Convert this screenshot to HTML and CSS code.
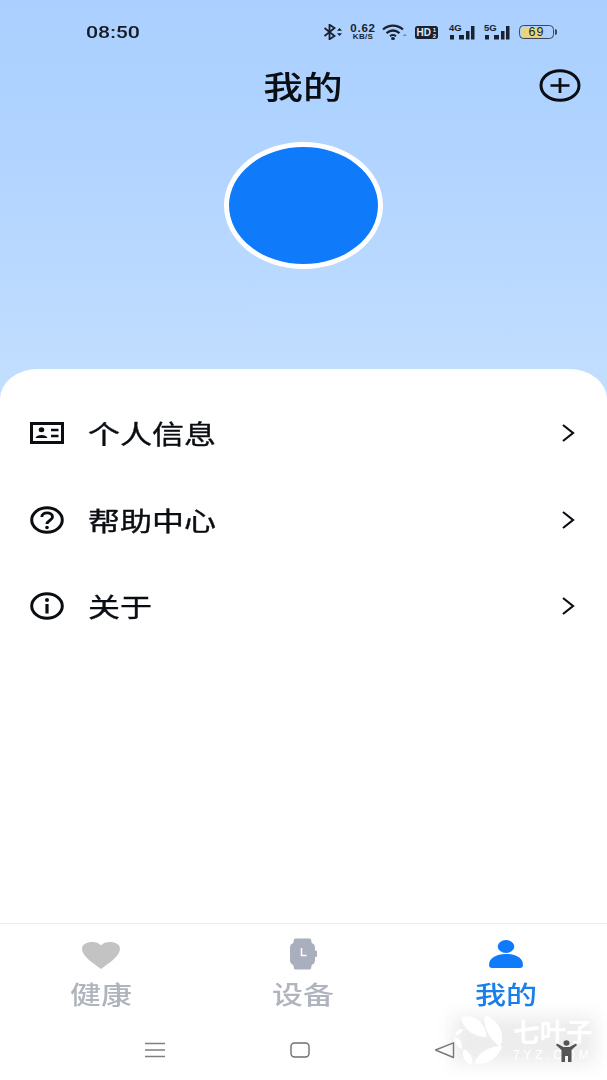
FILE: index.html
```html
<!DOCTYPE html>
<html lang="zh-CN">
<head>
<meta charset="utf-8">
<title>我的</title>
<link rel="stylesheet" href="styles.css">
</head>
<body>
<div class="screen">
  <header class="hero">
    <div class="status">
      <span class="time">08:50</span>
      <div class="status-icons">
        <svg class="i-bt" width="19" height="16" viewBox="0 0 19 16"><path d="M0.500 4l10 8-5 3.300V.7l5 3.300-10 8" fill="none" stroke="#1a2230" stroke-width="1.800"/><path d="M13 6.700l2.500-2.700 2.500 2.700zM13 9.300l2.500 2.700 2.500-2.700z" fill="#1a2230"/></svg>
        <div class="speed"><span class="speed-num">0.62</span><span class="speed-unit">KB/S</span></div>
        <svg class="i-wifi" width="26" height="16" viewBox="0 0 26 16"><path d="M1 5.500C7 .3 15 .3 21 5.500M4.500 9.200C9 5.500 13 5.500 17.500 9.200" fill="none" stroke="#1a2230" stroke-width="2.300"/><path d="M8 12.200c2-1.500 4-1.500 6 0" fill="none" stroke="#1a2230" stroke-width="2"/><ellipse cx="11" cy="14.500" rx="2" ry="1.500" fill="#1a2230"/><path d="M20.500 12l2.200-2.200 2.200 2.200z" fill="#7f8da0"/></svg>
        <svg class="i-hd" width="23" height="13" viewBox="0 0 23 13"><rect width="23" height="13" rx="2.500" fill="#1a2230"/><text class="hd-text" x="1.500" y="10">HD</text><text class="hd-sub" x="17.800" y="5.800">1</text><text class="hd-sub" x="17.800" y="11.500">2</text></svg>
        <div class="signal"><span class="net">4G</span><svg width="26" height="16" viewBox="0 0 26 16"><path d="M1 11h4v4.500H1zM10 11h5v4.500h-5zM17 7h3.500v8.500H17zM22 2h3.500v13.500H22z" fill="#1a2230"/></svg></div>
        <div class="signal"><span class="net">5G</span><svg width="26" height="16" viewBox="0 0 26 16"><path d="M1 11h4v4.500H1zM10 11h5v4.500h-5zM17 7h3.500v8.500H17zM22 2h3.500v13.500H22z" fill="#1a2230"/></svg></div>
        <div class="battery"><div class="battery-body"><span class="battery-fill"></span><span class="battery-num">69</span></div><span class="battery-cap"></span></div>
      </div>
    </div>
    <div class="title-row">
      <span></span>
      <h1 class="title"><span class="wide-c">我的</span></h1>
      <svg class="add" width="42" height="33" viewBox="0 0 42 33"><ellipse cx="21" cy="16.500" rx="19" ry="14.800" fill="none" stroke="#0a0d12" stroke-width="3"/><path d="M11.500 16.500h19M21 9v15" fill="none" stroke="#0a0d12" stroke-width="2.700"/></svg>
    </div>
    <div class="avatar"></div>
  </header>

  <main class="sheet">
    <div class="row">
      <svg class="row-icon" width="34" height="24" viewBox="0 0 34 24"><rect x="1.500" y="2.500" width="31" height="19" fill="none" stroke="#0a0d12" stroke-width="3"/><ellipse cx="11.500" cy="8.800" rx="2.800" ry="2.500" fill="#0a0d12"/><path d="M5.500 17c1-4 11-4 12 0z" fill="#0a0d12"/><path d="M21 9h7.500M21 15h7.500" stroke="#0a0d12" stroke-width="2.400"/></svg>
      <span class="row-label"><span class="wide-l">个人信息</span></span>
      <svg class="chev" width="14" height="20" viewBox="0 0 14 20"><path d="M2 2l10 8-10 8" fill="none" stroke="#0a0d12" stroke-width="2.200"/></svg>
    </div>
    <div class="row">
      <svg class="row-icon" width="34" height="28" viewBox="0 0 34 28"><ellipse cx="17" cy="14" rx="15.300" ry="12.200" fill="none" stroke="#0a0d12" stroke-width="3"/><path d="M11.800 11C11.800 5.500 22.500 5.500 22.500 11 22.500 14.500 17 14.500 17 18" fill="none" stroke="#0a0d12" stroke-width="2.900"/><circle cx="17" cy="21.500" r="1.800" fill="#0a0d12"/></svg>
      <span class="row-label"><span class="wide-l">帮助中心</span></span>
      <svg class="chev" width="14" height="20" viewBox="0 0 14 20"><path d="M2 2l10 8-10 8" fill="none" stroke="#0a0d12" stroke-width="2.200"/></svg>
    </div>
    <div class="row">
      <svg class="row-icon" width="34" height="28" viewBox="0 0 34 28"><ellipse cx="17" cy="14" rx="15.300" ry="12.200" fill="none" stroke="#0a0d12" stroke-width="3"/><path d="M17 12v9.500" fill="none" stroke="#0a0d12" stroke-width="3.200"/><circle cx="17" cy="8" r="2" fill="#0a0d12"/></svg>
      <span class="row-label"><span class="wide-l">关于</span></span>
      <svg class="chev" width="14" height="20" viewBox="0 0 14 20"><path d="M2 2l10 8-10 8" fill="none" stroke="#0a0d12" stroke-width="2.200"/></svg>
    </div>
  </main>

  <nav class="tabs">
    <div class="tab">
      <svg width="40" height="32" viewBox="0 0 40 32"><path d="M20 31C12 25 1 18 1 11 1 6 6 4 11 4 15 4 18 5 20 7.500 22 5 25 4 29 4 34 4 39 6 39 11 39 18 28 25 20 31z" fill="#c3c3c3"/></svg>
      <span class="tab-label"><span class="wide-c">健康</span></span>
    </div>
    <div class="tab">
      <svg width="28" height="32" viewBox="0 0 28 32"><path d="M5 1.500C5 .7 6 .5 7 .5h13c1 0 2 .2 2 1L23 6H4zM4 26h19l-1 4.500c0 .8-1 1-2 1H7c-1 0-2-.2-2-1z" fill="#a9afbc"/><rect x="1" y="5" width="25" height="22" rx="4.500" fill="#a9afbc"/><rect x="25.500" y="12.500" width="2.500" height="6.500" rx="1" fill="#a9afbc"/><path d="M12.500 10v7.500h5" fill="none" stroke="#fff" stroke-width="1.500"/></svg>
      <span class="tab-label"><span class="wide-c">设备</span></span>
    </div>
    <div class="tab tab-active">
      <svg width="36" height="32" viewBox="0 0 36 32"><ellipse cx="18" cy="8.500" rx="8.300" ry="6.500" fill="#0f7bfb"/><path d="M1 27C1 20 8 16 18 16S35 20 35 27c0 2-1 3-3 3H4C2 30 1 29 1 27z" fill="#0f7bfb"/></svg>
      <span class="tab-label"><span class="wide-c">我的</span></span>
    </div>
  </nav>

  <div class="sysnav">
    <svg width="22" height="18" viewBox="0 0 22 18"><path d="M1 2.500h20M1 9h20M1 15.500h20" stroke="#7f7f7f" stroke-width="1.300"/></svg>
    <svg width="20" height="18" viewBox="0 0 20 18"><rect x="1" y="2" width="18" height="14" rx="3.500" fill="none" stroke="#6f6f6f" stroke-width="1.400"/></svg>
    <svg width="21" height="18" viewBox="0 0 21 18"><path d="M1.500 9L19.500 1.800V16.500z" fill="none" stroke="#7a7a7a" stroke-width="1.400" stroke-linejoin="round"/></svg>
  </div>

  <div class="watermark">
    <svg class="wm-logo" width="54" height="54" viewBox="0 0 54 54"><path d="M9 5C20 2 33 8 35 25 22 25 11 18 9 5zM33 3C47 9 54 22 48 35 40 29 30 17 33 3zM23 51C26 40 38 34 50 34 47 46 34 54 23 51zM12 37C19 41 22 47 19 53 12 50 9 43 12 37zM3 25C8 26 11 31 10 37 5 35 2 30 3 25zM3 23C4 19 7 17 11 17 10 21 7 23 3 23z" fill="#fff"/></svg>
    <div class="wm-text"><span class="wm-cn">七叶子</span><span class="wm-en">7YZ.COM</span></div>
  </div>
  <svg class="access" width="21" height="22" viewBox="0 0 21 22"><ellipse cx="10.500" cy="3" rx="3" ry="2.800" fill="#555"/><path d="M0 5l1-1.500L7.500 7h6L20 3.500 21 5l-5.500 5v12H12v-6H9v6H5.500V10z" fill="#555"/></svg>
</div>
</body>
</html>
```

FILE: styles.css
```css
* { box-sizing: border-box; }
html, body { margin: 0; padding: 0; }
body { font-family: "Noto Sans CJK SC", "Noto Sans", sans-serif; color: #0a0d12; }
.screen {
  position: relative;
  width: 607px;
  height: 1080px;
  overflow: hidden;
  display: flex;
  flex-direction: column;
  background: #fff;
}
.hero {
  height: 410px;
  flex: none;
  display: flex;
  flex-direction: column;
  background: linear-gradient(180deg, #abd0ff 0, #b0d3ff 140px, #c4dfff 410px);
}
.status {
  height: 32px;
  margin-top: 16px;
  display: flex;
  align-items: center;
  padding-left: 86px;
}
.time {
  display: inline-block;
  font-family: Roboto, sans-serif;
  font-size: 17px;
  font-weight: 500;
  width: 53px;
  white-space: nowrap;
  transform: scaleX(1.25);
  transform-origin: left center;
  color: #141a24;
}
.status-icons {
  margin-left: 185px;
  display: flex;
  align-items: center;
  color: #1a2230;
}
.i-bt { flex: none; margin-right: 6px; }
.speed { width: 28px; display: flex; flex-direction: column; align-items: center; font-family: "Liberation Sans", sans-serif; font-weight: 700; margin-right: 5px; }
.speed-num { font-size: 11.500px; line-height: 10px; letter-spacing: .8px; }
.speed-unit { font-size: 8px; line-height: 8px; letter-spacing: .3px; }
.i-wifi { flex: none; margin-right: 7px; }
.i-hd { flex: none; margin-right: 11px; }
.hd-text { font: 700 10px "Liberation Sans", sans-serif; fill: #dfe9f8; }
.hd-sub { font: 700 6px "Liberation Sans", sans-serif; fill: #dfe9f8; }
.signal { display: flex; align-items: flex-end; width: 26px; height: 16px; position: relative; margin-right: 9px; }
.net { position: absolute; left: 0; top: -1px; font: 700 9.500px/9px "Liberation Sans", sans-serif; }
.battery { display: flex; align-items: center; gap: 1px; }
.battery-body {
  width: 35px; height: 14px; border: 1.500px solid #3d4654; border-radius: 4.500px;
  position: relative; overflow: hidden; display: flex; align-items: center; justify-content: center;
}
.battery-fill { position: absolute; left: 1px; top: 1px; bottom: 1px; width: 21px; background: #e8d67f; border-radius: 2px; }
.battery-num { position: relative; font: 400 12.500px/12px "Liberation Sans", sans-serif; letter-spacing: 1px; }
.battery-cap { width: 2px; height: 6px; background: #3d4654; border-radius: 0 2px 2px 0; }
.title-row {
  margin-top: 16px;
  height: 44px;
  display: grid;
  grid-template-columns: 1fr auto 1fr;
  align-items: center;
  padding-right: 26px;
}
.title-row .add { justify-self: end; margin-bottom: 2px; }
.title { margin: 0 0 3px 26px; font-size: 32px; line-height: 40px; font-weight: 500; }
.wide-c { display: inline-block; transform: scaleX(1.24); transform-origin: center; white-space: nowrap; }
.wide-l { display: inline-block; transform: scaleX(1.23); transform-origin: left center; white-space: nowrap; }
.avatar {
  margin: 34px auto 0;
  width: 159px;
  height: 127px;
  border-radius: 50%;
  background: #0f7bfb;
  border: 5px solid #fff;
}
.sheet {
  flex: 1;
  margin-top: -41px;
  position: relative;
  padding-top: 21px;
  background: #fff;
  border-radius: 38px 38px 0 0 / 30px 30px 0 0;
}
.row {
  height: 86.500px;
  display: flex;
  align-items: center;
  padding: 0 32px 0 30px;
}
.row-icon { flex: none; width: 34px; }
.row-label { flex: 1; margin-left: 24px; font-size: 26px; line-height: 36px; font-weight: 400; -webkit-text-stroke: .35px #0a0d12; color: #0a0d12; }
.chev { flex: none; }
.tabs {
  flex: none;
  height: 97px;
  border-top: 1px solid #ececec;
  display: grid;
  grid-template-columns: repeat(3, 1fr);
  background: #fff;
  padding-top: 14px;
}
.tab { display: flex; flex-direction: column; align-items: center; color: #b0b5bd; }
.tab svg { height: 32px; flex: none; }
.tab-label { font-size: 25px; line-height: 30px; margin-top: 8px; font-weight: 500; }
.tab-active .tab-label { color: #1a7fea; }
.sysnav {
  flex: none;
  height: 60px;
  padding: 0 0 0 144px;
  display: grid;
  grid-template-columns: 146px 144px 21px;
  align-items: center;
  background: #fff;
}
.watermark {
  position: absolute;
  left: 452px;
  top: 1012px;
  display: flex;
  gap: 7px;
  color: #fff;
}
.watermark::before {
  content: "";
  position: absolute;
  left: 0;
  top: 4px;
  width: 144px;
  height: 48px;
  background: rgba(60, 60, 60, .09);
  filter: blur(8px);
}
.wm-logo { position: relative; flex: none; }
.wm-text { position: relative; display: flex; flex-direction: column; padding-top: 4px; }
.wm-cn { font-size: 26.500px; line-height: 30px; font-weight: 700; white-space: nowrap; }
.wm-en { font: 400 12px/14px "Liberation Sans", sans-serif; letter-spacing: 3.700px; white-space: nowrap; margin-top: 2px; }
.access { position: absolute; left: 556px; top: 1040px; }
```
